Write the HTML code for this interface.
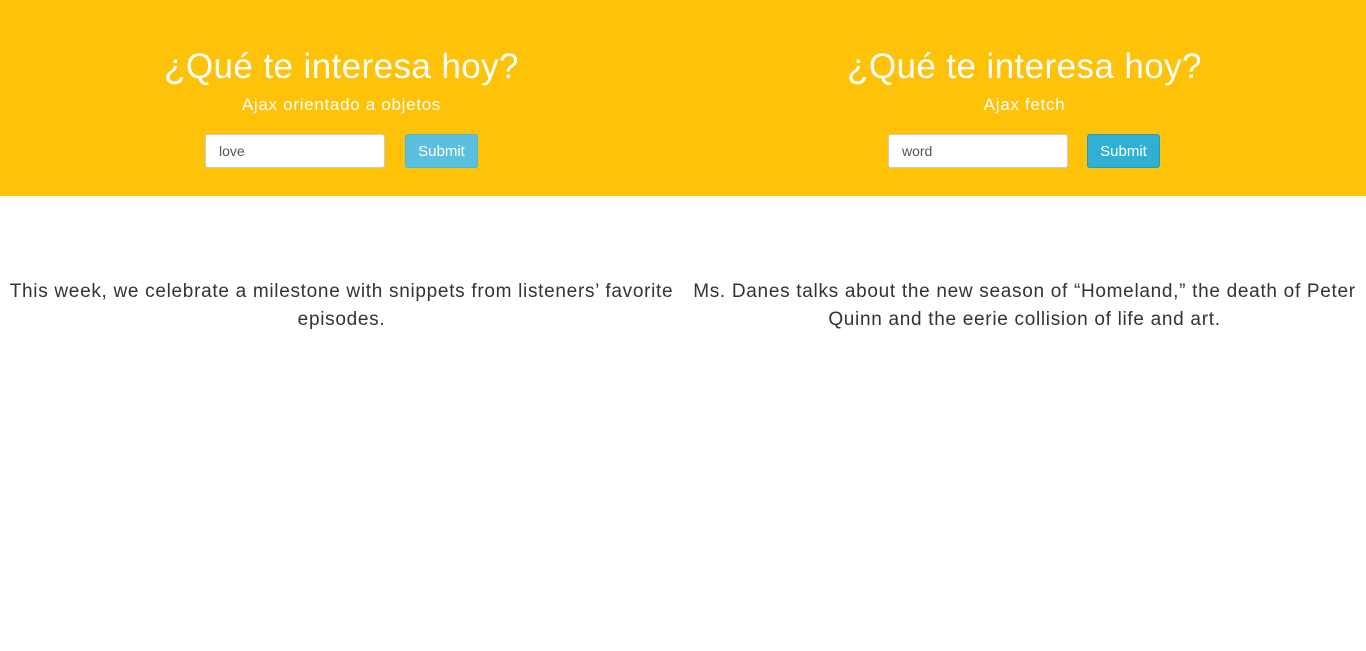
<!DOCTYPE html>
<html><head><meta charset="utf-8"><style>
body{margin:0;font-family:"Liberation Sans",sans-serif;background:#fff;width:1366px;height:651px;overflow:hidden}
.hdr{background:#fec208;height:196px;display:flex}
.col{width:683px;text-align:center;color:#fff;position:relative}
h1{font-weight:normal;font-size:35px;margin:0;position:absolute;top:47px;left:0;right:0;letter-spacing:0.4px}
.sub{font-size:17px;position:absolute;top:95px;left:0;right:0;letter-spacing:0.7px}
.inp{position:absolute;top:134px;width:178px;height:32px;background:#fff;border:1px solid #ccc;border-radius:3px;color:#555;font-size:14px;text-align:left;box-sizing:content-box}
.inp span{position:absolute;left:13px;top:8px}
.btn{position:absolute;top:134px;width:71px;height:32px;border-radius:3px;font-size:15px;line-height:33px;color:#fff;background:#5bc0de;border:1px solid #46b8da}
.btn2{background:#31b0d5;border-color:#269abc}
.body{display:flex}
.body p{width:683px;margin:0;text-align:center;font-size:19px;line-height:28px;color:#333;padding-top:278px;letter-spacing:0.7px}
</style></head><body>
<div class="hdr">
<div class="col"><h1>¿Qué te interesa hoy?</h1><div class="sub">Ajax orientado a objetos</div>
<div class="inp" style="left:205px"><span>love</span></div><div class="btn" style="left:405px">Submit</div></div>
<div class="col"><h1>¿Qué te interesa hoy?</h1><div class="sub">Ajax fetch</div>
<div class="inp" style="left:205px"><span>word</span></div><div class="btn btn2" style="left:404px">Submit</div></div>
</div>
<div class="body" style="margin-top:-196px">
<p>This week, we celebrate a milestone with snippets from listeners’ favorite episodes.</p>
<p>Ms. Danes talks about the new season of “Homeland,” the death of Peter Quinn and the eerie collision of life and art.</p>
</div>
</body></html>
